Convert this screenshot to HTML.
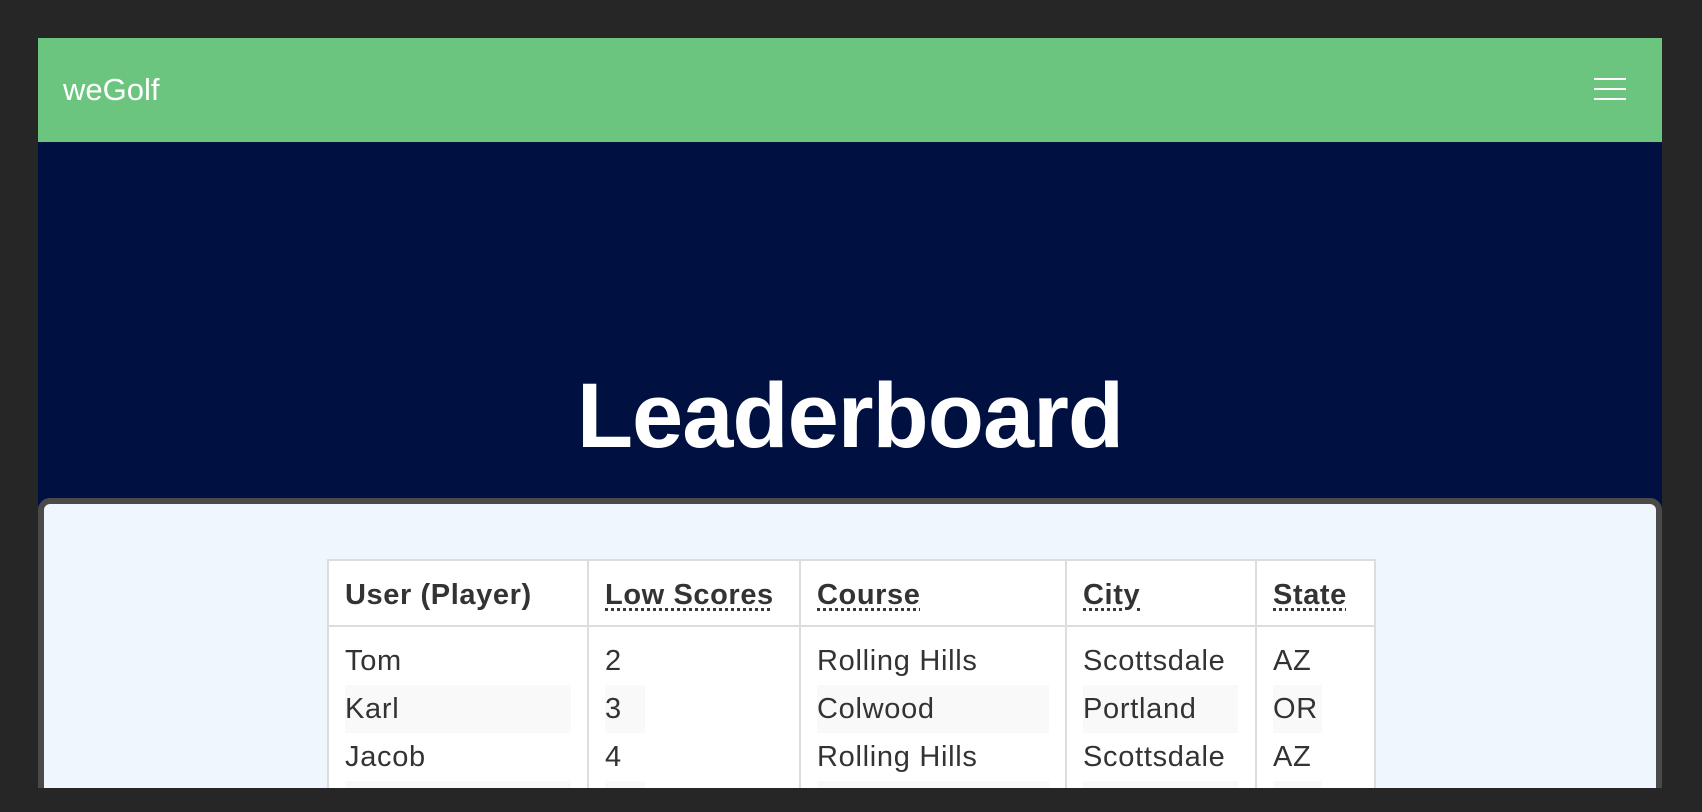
<!DOCTYPE html>
<html><head><style>
*{margin:0;padding:0;box-sizing:border-box}
html,body{width:1702px;height:812px;overflow:hidden}
body{background:#262626;position:relative;font-family:"Liberation Sans",Arial,sans-serif}
.nav{position:absolute;left:38px;top:38px;width:1624px;height:104px;background:#6cc57f}
.brand{position:absolute;left:25px;top:34px;color:#fff;font-size:31px}
.hb{position:absolute;left:1556px;width:32px;height:2px;background:#fff}
.hero{position:absolute;left:38px;top:142px;width:1624px;height:370px;background:#001040}
.hero h1{position:absolute;left:0;right:0;top:222px;text-align:center;color:#fff;font-size:92px;font-weight:bold;letter-spacing:-1px}
.card{position:absolute;left:38px;top:498px;width:1624px;height:290px;background:#f0f6fd;border:6px solid #4a4a4a;border-bottom:none;border-radius:12px 12px 0 0;overflow:hidden}
.bot{position:absolute;left:0;top:788px;width:1702px;height:24px;background:#262626}
table{position:absolute;left:283px;top:55px;border-collapse:collapse;background:#fff;color:#333}
td,th{border:2px solid #ddd;text-align:left;vertical-align:top;padding:0 0 0 16px}
th{height:66px;font-size:29px;letter-spacing:.6px;font-weight:bold;padding-top:18px}
th abbr{text-decoration:underline dotted;text-underline-offset:4px}
td{padding-top:10px;font-size:29px;letter-spacing:.7px}
td div{height:48px;line-height:48px}
td div.s{background:#f9f9f9}
</style></head><body>
<div class="nav"><div class="brand">weGolf</div>
<div class="hb" style="top:40px"></div><div class="hb" style="top:50px"></div><div class="hb" style="top:60px"></div></div>
<div class="hero"><h1>Leaderboard</h1></div>
<div class="card">
<table>
<tr><th style="width:260px">User (Player)</th><th style="width:212px"><abbr>Low Scores</abbr></th><th style="width:266px"><abbr>Course</abbr></th><th style="width:190px"><abbr>City</abbr></th><th style="width:119px"><abbr>State</abbr></th></tr>
<tr style="height:220px">
<td><div style="width:226px">Tom</div><div class="s" style="width:226px">Karl</div><div style="width:226px">Jacob</div><div class="s" style="width:226px">&nbsp;</div></td>
<td><div style="width:40px">2</div><div class="s" style="width:40px">3</div><div style="width:40px">4</div><div class="s" style="width:40px">&nbsp;</div></td>
<td><div style="width:232px">Rolling Hills</div><div class="s" style="width:232px">Colwood</div><div style="width:232px">Rolling Hills</div><div class="s" style="width:232px">&nbsp;</div></td>
<td><div style="width:155px">Scottsdale</div><div class="s" style="width:155px">Portland</div><div style="width:155px">Scottsdale</div><div class="s" style="width:155px">&nbsp;</div></td>
<td><div style="width:49px">AZ</div><div class="s" style="width:49px">OR</div><div style="width:49px">AZ</div><div class="s" style="width:49px">&nbsp;</div></td>
</tr></table>
</div>
<div class="bot"></div>
</body></html>
